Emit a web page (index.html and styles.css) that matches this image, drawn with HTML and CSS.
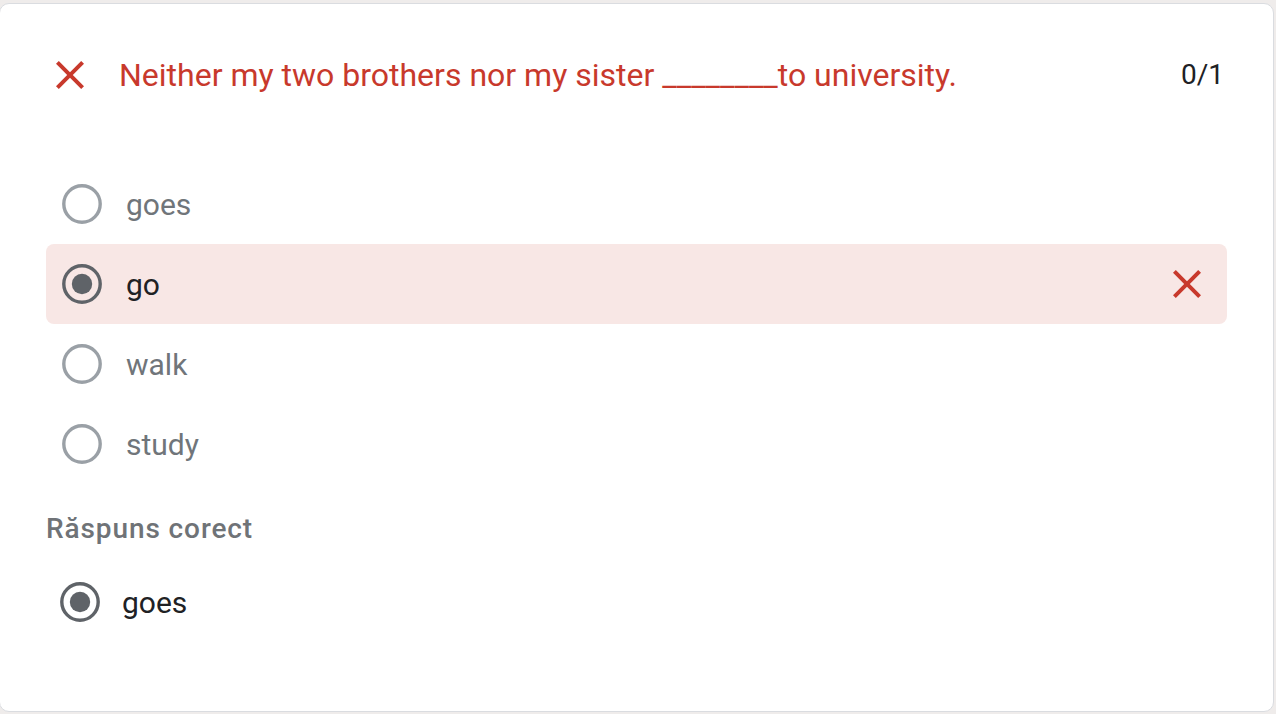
FILE: index.html
```html
<!DOCTYPE html>
<html lang="ro">
<head>
<meta charset="utf-8">
<title>Quiz</title>
<link rel="stylesheet" href="styles.css">
</head>
<body>
<div class="card">
  <div class="header">
    <svg class="x-icon" viewBox="0 0 24 24" width="48" height="48"><path d="M19 6.41L17.59 5 12 10.59 6.41 5 5 6.41 10.59 12 5 17.59 6.41 19 12 13.41 17.59 19 19 17.59 13.41 12z"/></svg>
    <div class="question">Neither my two brothers nor my sister ________to university.</div>
    <div class="score">0/1</div>
  </div>
  <div class="options">
    <div class="option">
      <svg class="radio" viewBox="0 0 40 40" width="40" height="40"><circle cx="20" cy="20" r="18.2" class="ring"/></svg>
      <span class="label">goes</span>
    </div>
    <div class="option wrong">
      <svg class="radio checked" viewBox="0 0 40 40" width="40" height="40"><circle cx="20" cy="20" r="18.2" class="ring"/><circle cx="20" cy="20" r="10.2" class="dot"/></svg>
      <span class="label">go</span>
      <svg class="x-icon mark" viewBox="0 0 24 24" width="48" height="48"><path d="M19 6.41L17.59 5 12 10.59 6.41 5 5 6.41 10.59 12 5 17.59 6.41 19 12 13.41 17.59 19 19 17.59 13.41 12z"/></svg>
    </div>
    <div class="option">
      <svg class="radio" viewBox="0 0 40 40" width="40" height="40"><circle cx="20" cy="20" r="18.2" class="ring"/></svg>
      <span class="label">walk</span>
    </div>
    <div class="option">
      <svg class="radio" viewBox="0 0 40 40" width="40" height="40"><circle cx="20" cy="20" r="18.2" class="ring"/></svg>
      <span class="label">study</span>
    </div>
  </div>
  <div class="correct-title">Răspuns corect</div>
  <div class="correct">
    <svg class="radio checked" viewBox="0 0 40 40" width="40" height="40"><circle cx="20" cy="20" r="18.2" class="ring"/><circle cx="20" cy="20" r="10.2" class="dot"/></svg>
    <span class="label">goes</span>
  </div>
</div>
</body>
</html>
```

FILE: styles.css
```css
html, body {
  margin: 0;
  padding: 0;
}
body {
  background: #efeceb;
  font-family: Roboto, "Liberation Sans", Arial, sans-serif;
  width: 1276px;
  height: 714px;
  overflow: hidden;
}
.card {
  box-sizing: border-box;
  width: 1275px;
  height: 709px;
  margin: 3px 0 0 -1px;
  background: #ffffff;
  border: 1px solid #dadce0;
  border-radius: 10px;
  padding: 0 46px;
}
.header {
  display: flex;
  align-items: center;
  padding-top: 47px;
}
.x-icon {
  display: block;
  flex: none;
  fill: #c8392c;
}
.question {
  flex: 1;
  margin-left: 25px;
  font-size: 32px;
  line-height: 40px;
  color: #c8392c;
}
.score {
  font-size: 28px;
  line-height: 40px;
  color: #202124;
  margin-right: 3px;
}
.options {
  margin-top: 65px;
}
.option {
  display: flex;
  align-items: center;
  height: 80px;
  padding: 0 16px;
  border-radius: 8px;
}
.option.wrong {
  background: #f8e7e5;
}
.radio {
  display: block;
  flex: none;
}
.ring {
  fill: none;
  stroke: #9aa0a6;
  stroke-width: 3.4;
}
.checked .ring {
  stroke: #5f6368;
}
.dot {
  fill: #5f6368;
}
.label {
  flex: 1;
  margin-left: 24px;
  font-size: 30px;
  color: #70757a;
}
.wrong .label {
  color: #202124;
}
.option .mark {
  margin-left: auto;
}
.correct-title {
  margin-top: 28px;
  font-size: 28px;
  line-height: 34px;
  font-weight: 500;
  color: #6f7377;
  letter-spacing: 0.9px;
}
.correct {
  display: flex;
  align-items: center;
  height: 80px;
  margin-top: 16px;
  padding-left: 14px;
}
.correct .label {
  margin-left: 22px;
  color: #202124;
}
```
